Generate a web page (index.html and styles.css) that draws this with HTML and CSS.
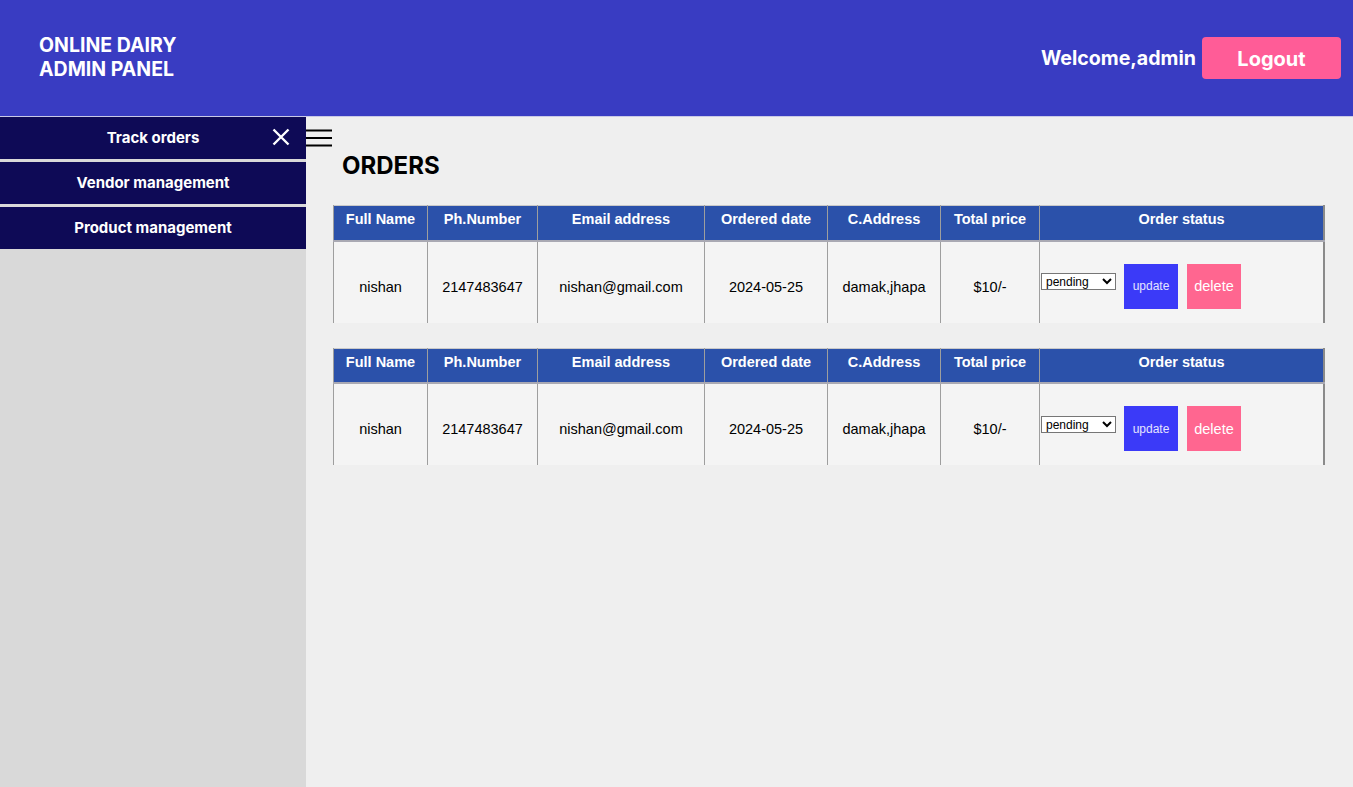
FILE: index.html
```html
<!DOCTYPE html>
<html>
<head>
<meta charset="utf-8">
<title>Admin Panel</title>
<link rel="stylesheet" href="styles.css">
</head>
<body>
<header class="topbar">
  <div class="brand">ONLINE DAIRY<br>ADMIN PANEL</div>
  <div class="user">
    <span class="welcome">Welcome,admin</span>
    <button class="logout">Logout</button>
  </div>
</header>
<div class="layout">
  <aside class="sidebar">
    <a class="nav-item">Track orders
      <svg class="close" width="18" height="18" viewBox="0 0 18 18"><path d="M1.5 1.5L16.5 16.5M16.5 1.5L1.5 16.5" stroke="#fff" stroke-width="2.4" fill="none"/></svg>
    </a>
    <a class="nav-item">Vendor management</a>
    <a class="nav-item">Product management</a>
  </aside>
  <main class="main">
    <svg class="burger" width="26" height="18" viewBox="0 0 26 18"><path d="M0 1.5H26M0 9H26M0 16.5H26" stroke="#000" stroke-width="2.2"/></svg>
    <h1 class="title">ORDERS</h1>
    <table class="orders">
      <tr class="head"><th class="c1">Full Name</th><th class="c2">Ph.Number</th><th class="c3">Email address</th><th class="c4">Ordered date</th><th class="c5">C.Address</th><th class="c6">Total price</th><th class="c7">Order status</th></tr>
      <tr class="row"><td>nishan</td><td>2147483647</td><td>nishan@gmail.com</td><td>2024-05-25</td><td>damak,jhapa</td><td>$10/-</td>
        <td class="status"><div class="actions"><select class="sel"><option>pending</option></select><button class="upd">update</button><button class="del">delete</button></div></td></tr>
    </table>
    <table class="orders">
      <tr class="head"><th class="c1">Full Name</th><th class="c2">Ph.Number</th><th class="c3">Email address</th><th class="c4">Ordered date</th><th class="c5">C.Address</th><th class="c6">Total price</th><th class="c7">Order status</th></tr>
      <tr class="row"><td>nishan</td><td>2147483647</td><td>nishan@gmail.com</td><td>2024-05-25</td><td>damak,jhapa</td><td>$10/-</td>
        <td class="status"><div class="actions"><select class="sel"><option>pending</option></select><button class="upd">update</button><button class="del">delete</button></div></td></tr>
    </table>
  </main>
</div>
</body>
</html>
```
FILE: styles.css
```css
* { box-sizing: border-box; }
html, body { margin: 0; height: 100%; }
body { font-family: Inter, "Noto Sans", sans-serif; background: #efefef; }
.topbar {
  height: 117px; background: #393cc2; border-bottom: 1px solid #c9c9e6;
  display: flex; align-items: center; justify-content: space-between;
  padding: 0 12px 0 39px;
}
.brand { color: #fff; font-weight: 700; font-size: 19.5px; line-height: 24px; margin-top: -3px; }
.user { display: flex; align-items: center; gap: 6px; }
.welcome { color: #fff; font-weight: 700; font-size: 19.6px; }
.logout {
  width: 139px; height: 42px; background: #ff5c97; color: #fff; border: none;
  border-radius: 4px; font-family: Inter, sans-serif; font-weight: 700; font-size: 20px; padding-top: 2px;
}
.layout { display: flex; height: calc(100% - 117px); }
.sidebar { width: 306px; background: #d9d9d9; flex: none; }
.nav-item {
  display: flex; align-items: center; justify-content: center; position: relative;
  height: 42px; background: #0e0a56; color: #fff; font-weight: 700; font-size: 15px;
  margin-bottom: 3px; padding-bottom: 1px;
}
.close { position: absolute; right: 16px; top: 11px; }
.main { flex: 1; position: relative; padding: 35px 28px 0 27px; }
.burger { position: absolute; left: 0; top: 12px; }
.title { margin: 0 0 25px 9px; font-size: 24px; font-weight: 700; line-height: 28px; color: #000; }
.orders {
  border-collapse: collapse; font-family: "Liberation Sans", Arial, sans-serif;
  width: 992px; margin-bottom: 25px; table-layout: fixed;
  border-top: 1px solid #c9c9c9; border-right: 2px solid #8a8a8a;
}
.orders th, .orders td { border-left: 1px solid #9e9e9e; text-align: center; }
.head th {
  background: #2b51aa; color: #fff; font-size: 14.5px; font-weight: 700;
  height: 35px; vertical-align: top; padding: 5px 4px 0;
  border-bottom: 2px solid #a9a9b3;
}
.row td { background: #f4f4f4; height: 82px; font-size: 14.5px; color: #000; padding-top: 10px; }
.c1 { width: 94px; } .c2 { width: 110px; } .c3 { width: 167px; } .c4 { width: 123px; }
.c5 { width: 113px; } .c6 { width: 99px; }
.row td.status { padding: 0; text-align: left; }
.actions { display: flex; align-items: center; padding-left: 1px; padding-top: 8px; }
.sel { width: 75px; height: 17px; font-size: 12px; font-family: "Liberation Sans", Arial, sans-serif; padding: 0; margin-top: -9px; border: 1px solid #767676; background: #fff; }
.upd, .del { border: none; height: 45px; width: 54px; font-family: "Liberation Sans", Arial, sans-serif; }
.upd { background: #3b3af8; color: #e4e4ff; font-size: 12px; margin-left: 8px; }
.del { background: #ff6690; color: #fff; font-size: 14.5px; margin-left: 9px; }
```
